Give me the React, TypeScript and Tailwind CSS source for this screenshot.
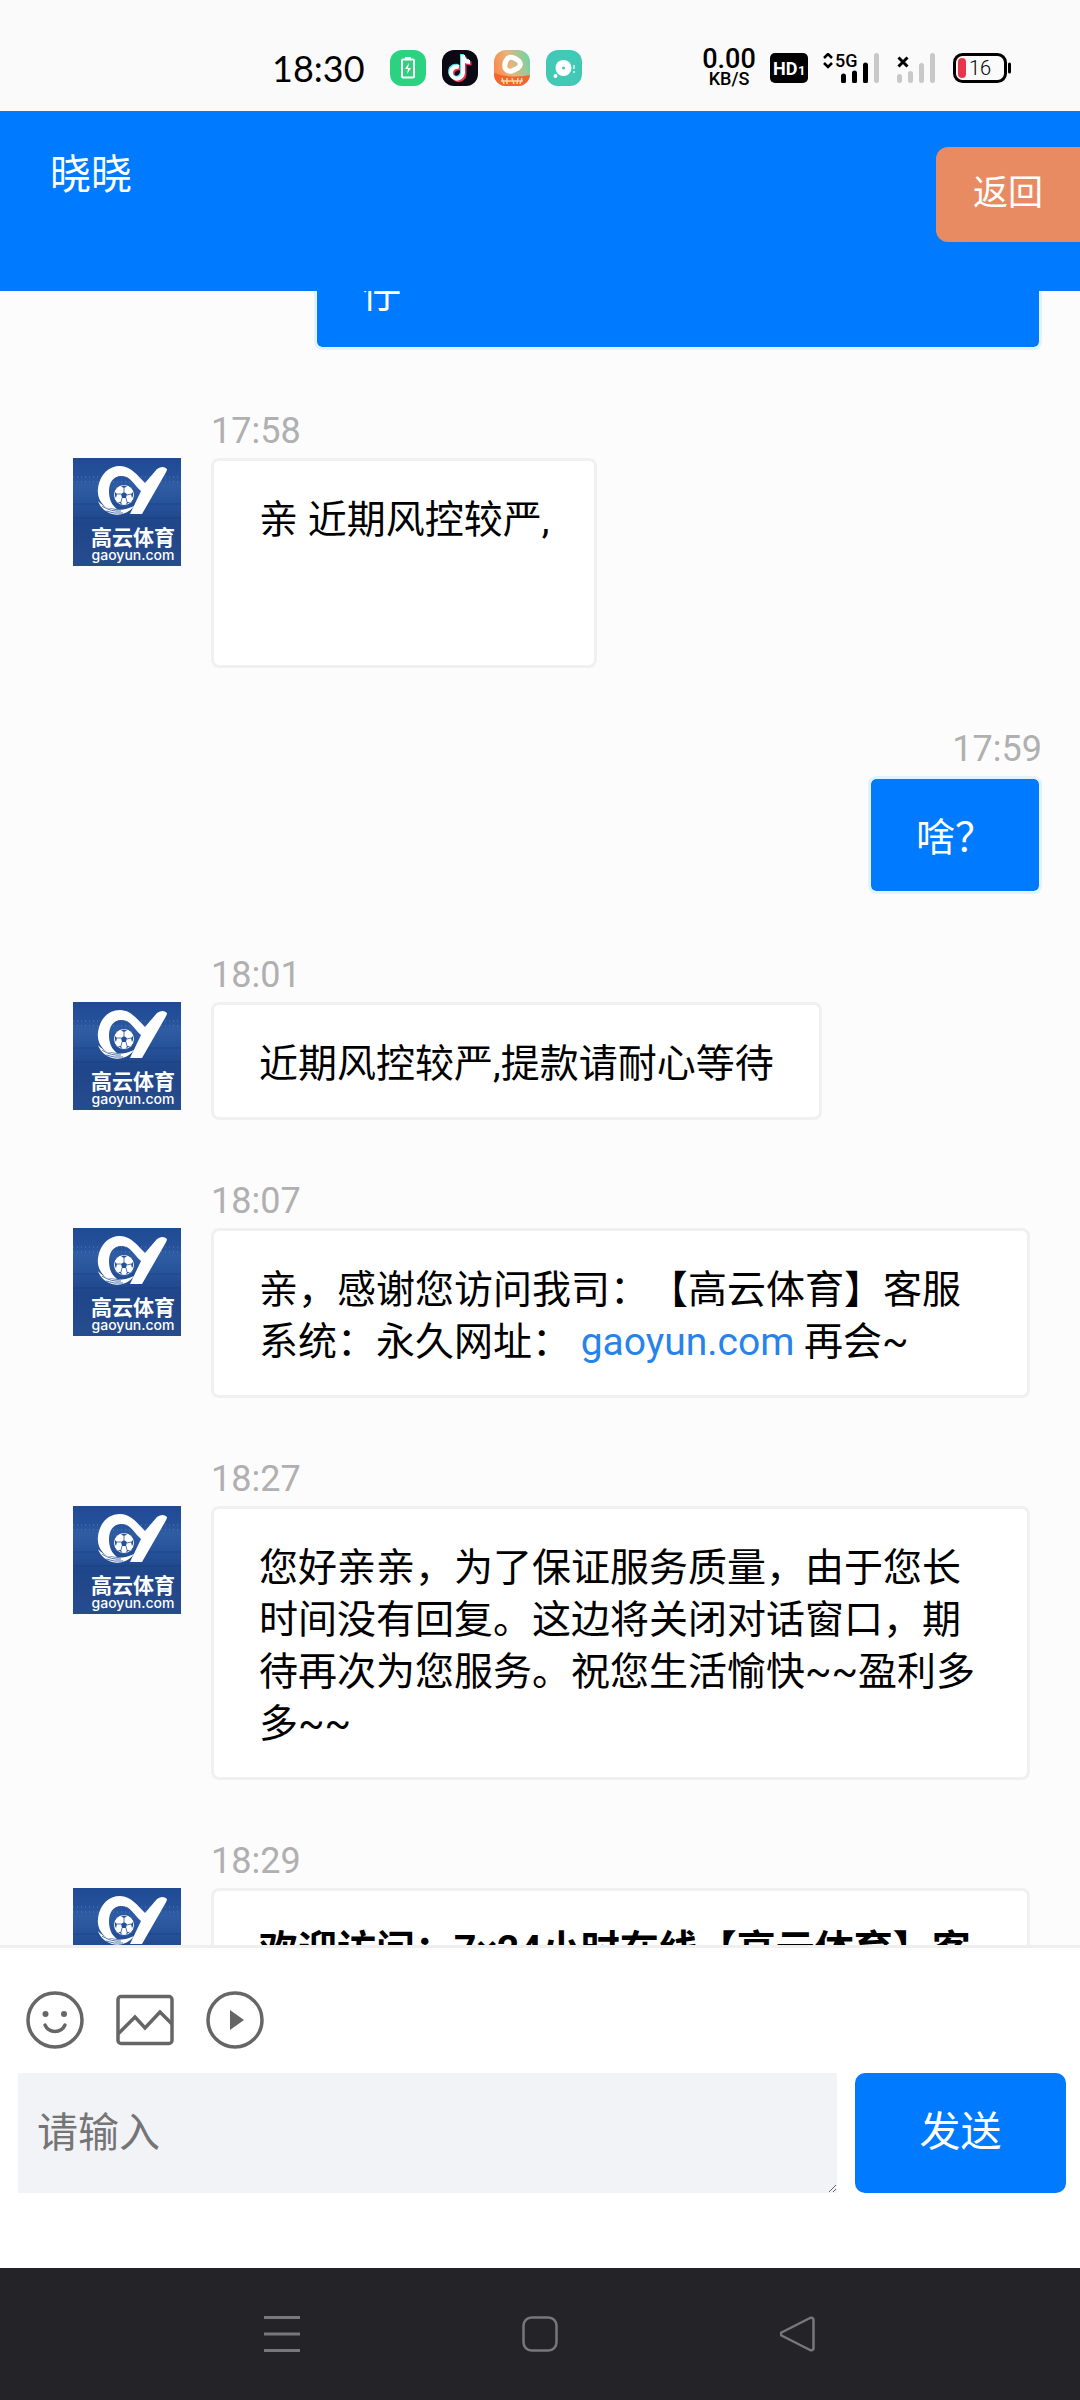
import type { ReactNode } from "react"

type Message = {
    time: string
    own?: boolean
    className?: string
    content: ReactNode
}

const messages: Message[] = [
    { time: "17:57", own: true, className: "w-[728px]", content: "仔" },
    { time: "17:58", className: "min-h-[210px]", content: "亲 近期风控较严," },
    { time: "17:59", own: true, content: "啥？" },
    { time: "18:01", content: "近期风控较严,提款请耐心等待" },
    {
        time: "18:07",
        content: (
            <>
                亲，感谢您访问我司：【高云体育】客服系统：永久网址： <a href="#" className="text-[#2683ea]">gaoyun.com</a> 再会~
            </>
        ),
    },
    { time: "18:27", content: "您好亲亲，为了保证服务质量，由于您长时间没有回复。这边将关闭对话窗口，期待再次为您服务。祝您生活愉快~~盈利多多~~" },
    { time: "18:29", content: <strong>欢迎访问：7×24小时在线【高云体育】客服</strong> },
]

const Avatar = () => (
    <svg viewBox="0 0 108 108" className="size-[108px] shrink-0" role="img" aria-label="高云体育">
        <defs>
            <linearGradient id="avatar-bg" x1="0" y1="0" x2="0" y2="1">
                <stop offset="0" stopColor="#1f4b93" />
                <stop offset="0.17" stopColor="#24519a" />
                <stop offset="0.25" stopColor="#2f5da3" />
                <stop offset="0.42" stopColor="#26529a" />
                <stop offset="0.6" stopColor="#1f468a" />
                <stop offset="1" stopColor="#274c8e" />
            </linearGradient>
        </defs>
        <rect width="108" height="108" fill="url(#avatar-bg)" />
        <path d="M0 19h108M0 24h108" stroke="#5f86bf" strokeWidth="2" strokeDasharray="1 3" opacity="0.4" />
        <path d="M0 46h108M0 60h108" stroke="#183a78" strokeWidth="1" opacity="0.5" />
        <g fill="#fff">
            <path d="M34 50C27 45 24 38 25 30C27 16 36 8 47 8C58 8 65 18 72 25L84 11Q90 7 94 11Q94 13 92 16L69 56H57L68 33C61 27 57 17 48 18C40 18 36 25 36 33C36 42 39 47 44 51Z" />
            <path d="M25 43C31 50 44 56 61 48C55 56 46 58 39 56C32 54 27 49 25 43Z" />
            <circle cx="51" cy="37" r="10.500" stroke="#24519a" strokeWidth="1" />
        </g>
        <path d="M29 48Q38 54 48 53M33 53Q41 56 50 55" stroke="#24519a" strokeWidth="0.8" fill="none" />
        <g fill="#24519a">
            <path d="M51 34l3 2-1 4h-4l-1-4z" />
            <path d="M48 28.500l3 1.500 3-1.500-3-1zM60 34l-2 2 1 4 1-2zM57 44l-3 0-1 2.500zM45 44l3 0 1 2.500zM42 34l2 2-1 4-1-2z" />
            <path d="M51 30v4M58 36l-4 1M54 44l-1-4M48 44l1-4M44 36l4 0" stroke="#24519a" strokeWidth="0.8" />
        </g>
        <text x="60" y="87" textAnchor="middle" fill="#fff" fontSize="21" fontWeight="700" fontFamily="'Noto Sans CJK SC', sans-serif">高云体育</text>
        <text x="60" y="102" textAnchor="middle" fill="#fff" fontSize="14" fontWeight="500" fontFamily="Inter, sans-serif">gaoyun.com</text>
    </svg>
)

const MessageRow = ({ time, own, className = "", content }: Message) => (
    <li className={own ? "flex flex-col items-end pr-[38px] pl-[73px]" : "flex items-end pr-[50px] pl-[73px]"}>
        {own ? (
            <>
                <time className="text-4xl leading-[54px] text-[#b0b0b0]">{time}</time>
                <div className={`rounded-lg border-3 border-[#e3f3fe] bg-[#007aff] bg-clip-padding px-[45px] pt-[33px] pb-[27px] text-white ${className}`}>{content}</div>
            </>
        ) : (
            <div className="grid grid-cols-[108px_auto] gap-x-[30px]">
                <time className="col-start-2 text-4xl leading-[54px] text-[#b0b0b0]">{time}</time>
                <Avatar />
                <div className={`justify-self-start rounded-lg border-3 border-[#f0f0f0] bg-white px-[45px] pt-[33px] pb-[27px] text-black ${className}`}>{content}</div>
            </div>
        )}
    </li>
)

const AppIcons = () => (
    <div className="flex gap-4">
        <svg viewBox="0 0 36 36" className="size-9">
            <rect width="36" height="36" rx="12" fill="#2bd280" />
            <rect x="12" y="9.500" width="12" height="18" rx="1" fill="none" stroke="#fff" strokeWidth="2" />
            <path d="M15 7h6v2h-6zM19 13l-4 6h3l-1 5 4-6h-3z" fill="#fff" />
        </svg>
        <svg viewBox="0 0 36 36" className="size-9">
            <rect width="36" height="36" rx="12" fill="#0b0a14" />
            <g fill="none" strokeWidth="4">
                <path d="M17 17a6 6 0 1 0 4 6V5c0 5 3 7 7 7" stroke="#ee3558" transform="translate(1.500 1.500)" />
                <path d="M17 17a6 6 0 1 0 4 6V5c0 5 3 7 7 7" stroke="#46e6e8" transform="translate(-1 -1)" />
                <path d="M17 17a6 6 0 1 0 4 6V5c0 5 3 7 7 7" stroke="#fff" />
            </g>
        </svg>
        <svg viewBox="0 0 36 36" className="size-9">
            <defs>
                <linearGradient id="video-bg" x1="0" y1="0.500" x2="1" y2="0.200">
                    <stop offset="0" stopColor="#f98b4b" />
                    <stop offset="0.45" stopColor="#e8b47c" />
                    <stop offset="1" stopColor="#68d6a8" />
                </linearGradient>
                <clipPath id="video-clip"><rect width="36" height="36" rx="12" /></clipPath>
            </defs>
            <g clipPath="url(#video-clip)">
                <rect width="36" height="36" fill="url(#video-bg)" />
                <path d="M0 23Q16 29 36 25V36H0z" fill="#f4652d" />
                <path d="M14 8Q17 6 22 9L25 11Q28 15 24 18L18 21Q13 22 11 18Q10 12 14 8Z" fill="none" stroke="#fff" strokeWidth="5" strokeLinejoin="round" />
                <path d="M7 31h22M8 28l2 6M13 28v6M18 28l2 6M24 28l-1 6M28 28l-2 6" stroke="#fbd9ad" strokeWidth="1.500" />
            </g>
        </svg>
        <svg viewBox="0 0 36 36" className="size-9">
            <rect width="36" height="36" rx="12" fill="#42c9b6" />
            <circle cx="17.500" cy="18" r="8" fill="#fff" />
            <circle cx="17.500" cy="18" r="1.500" fill="#42c9b6" />
            <circle cx="9.500" cy="26" r="2" fill="#fff" />
            <path d="M28 15v4M28 21v2" stroke="#d7f6f0" strokeWidth="1.500" />
        </svg>
    </div>
)

const SignalIcons = () => (
    <div className="flex items-center">
        <div className="flex w-[58px] flex-col items-center font-medium">
            <span className="text-[27px] leading-[22px]">0.00</span>
            <span className="text-lg leading-[18px]">KB/S</span>
        </div>
        <svg viewBox="0 0 38 30" className="ml-3 h-[30px] w-[38px]">
            <rect width="38" height="30" rx="5" />
            <text x="3" y="22" fill="#fff" fontSize="18" fontWeight="700" fontFamily="Roboto, sans-serif">HD</text>
            <text x="28" y="22" fill="#fff" fontSize="13" fontWeight="700" fontFamily="Roboto, sans-serif">1</text>
        </svg>
        <svg viewBox="0 0 57 30" className="ml-[15px] h-[30px] w-[57px]">
            <path d="M1 5l4-4 4 4M1 10l4 4 4-4" fill="none" stroke="#000" strokeWidth="2.500" />
            <text x="12" y="14" fontSize="18" fontWeight="500" fontFamily="Roboto, sans-serif">5G</text>
            <path d="M20.500 23v5M31.500 20v8M42.500 12v16" stroke="#000" strokeWidth="5" strokeLinecap="round" />
            <path d="M53.500 2.500v25" stroke="#c8c8c8" strokeWidth="5" strokeLinecap="round" />
        </svg>
        <svg viewBox="0 0 38 30" className="ml-[17px] h-[30px] w-[38px]">
            <path d="M1.500 4.500l9 9M10.500 4.500l-9 9" stroke="#000" strokeWidth="3" />
            <path d="M2.500 23.500v4M13.500 20.500v7M24.500 12.500v15M35.500 2.500v25" stroke="#c8c8c8" strokeWidth="5" strokeLinecap="round" />
        </svg>
        <svg viewBox="0 0 58 30" className="ml-[18px] h-[30px] w-[58px]">
            <rect x="1.500" y="1.500" width="51" height="27" rx="8" fill="none" stroke="#000" strokeWidth="3" />
            <rect x="5" y="5" width="8" height="20" rx="4" fill="#e93549" />
            <path d="M56.500 11v8" stroke="#000" strokeWidth="3" strokeLinecap="round" />
            <text x="16" y="22" fontSize="20" fontWeight="300" fontFamily="Roboto, sans-serif">16</text>
        </svg>
    </div>
)

const StatusBar = () => (
    <div className="flex h-[111px] shrink-0 items-center justify-between bg-[#fafafa] pt-6 pr-[69px] pl-[272px] text-black">
        <div className="flex items-center gap-6">
            <span className="w-[94px] font-['Lato',sans-serif] text-4xl leading-9">18:30</span>
            <AppIcons />
        </div>
        <SignalIcons />
    </div>
)

const Composer = () => (
    <form className="shrink-0 border-t-3 border-[#efefef] bg-white pt-[43px] pr-[14px] pb-[75px] pl-[18px]" onSubmit={(e) => e.preventDefault()}>
        <div className="mb-6 flex gap-8 pl-2 text-[#666]">
            <button type="button" aria-label="表情">
                <svg viewBox="0 0 58 58" className="size-[58px]" fill="none" stroke="currentColor" strokeWidth="3.500">
                    <circle cx="29" cy="29" r="27" />
                    <path d="M19 34a11 11 0 0 0 20 0" strokeLinecap="round" />
                    <circle cx="19.500" cy="23" r="3" fill="currentColor" stroke="none" />
                    <circle cx="38" cy="23" r="3" fill="currentColor" stroke="none" />
                </svg>
            </button>
            <button type="button" aria-label="图片">
                <svg viewBox="0 0 58 58" className="size-[58px]" fill="none" stroke="currentColor" strokeWidth="3.500">
                    <rect x="2" y="5.500" width="54" height="47" rx="3" />
                    <path d="M2 43L19 26L29 37L44 21L56 33" strokeWidth="3.500" />
                </svg>
            </button>
            <button type="button" aria-label="视频">
                <svg viewBox="0 0 58 58" className="size-[58px]" fill="none" stroke="currentColor" strokeWidth="3.500">
                    <circle cx="29" cy="29" r="27" />
                    <path d="M24 19L38 29L24 39Z" fill="currentColor" stroke="none" />
                </svg>
            </button>
        </div>
        <div className="flex gap-[18px]">
            <textarea
                aria-label="请输入"
                placeholder="请输入"
                className="h-[120px] min-w-0 flex-1 bg-[#f2f3f7] px-[19px] py-8 text-[41px] leading-[56px] text-black outline-none placeholder:text-[#757575]"
            />
            <button type="submit" className="w-[211px] rounded-[10px] bg-[#007aff] text-[41px] text-white">发送</button>
        </div>
    </form>
)

const NavBar = () => (
    <nav className="flex h-[132px] shrink-0 items-center justify-around bg-[#242328] px-[153px] text-[#78777c]">
        <button type="button" aria-label="最近任务">
            <svg viewBox="0 0 36 36" className="size-9" stroke="currentColor" strokeWidth="3">
                <path d="M0 1.500h36M0 18h36M0 34.500h36" />
            </svg>
        </button>
        <button type="button" aria-label="主屏幕">
            <svg viewBox="0 0 36 36" className="size-9" fill="none" stroke="currentColor" strokeWidth="2.500">
                <rect x="1.500" y="1.500" width="33" height="33" rx="8" />
            </svg>
        </button>
        <button type="button" aria-label="返回上一页">
            <svg viewBox="0 0 36 36" className="size-9" fill="none" stroke="currentColor" strokeWidth="2.500" strokeLinejoin="round">
                <path d="M1.500 16.500L30 2Q33.500 1 33.500 4V32Q33.500 35 30 34L1.500 19.500Q0 18 1.500 16.500Z" />
            </svg>
        </button>
    </nav>
)

export default function App() {
    return (
        <div lang="zh-CN" className="flex h-screen flex-col bg-[#fcfcfc] font-['Roboto','Noto_Sans_CJK_SC',sans-serif] [text-spacing-trim:space-all]">
            <StatusBar />
            <header className="flex h-[180px] shrink-0 items-start justify-between bg-[#007aff] pt-9 pl-[50px] text-white">
                <h1 className="text-[41px] leading-[56px]">晓晓</h1>
                <button type="button" className="h-[95px] w-36 rounded-l-xl bg-[#e88b62] text-[35px]">返回</button>
            </header>
            <main className="min-h-0 flex-1 overflow-hidden">
                <ul className="-mt-[113px] flex flex-col gap-[54px] text-[39px] leading-[52px]">
                    {messages.map((message) => (
                        <MessageRow key={message.time} {...message} />
                    ))}
                </ul>
            </main>
            <Composer />
            <NavBar />
        </div>
    )
}
